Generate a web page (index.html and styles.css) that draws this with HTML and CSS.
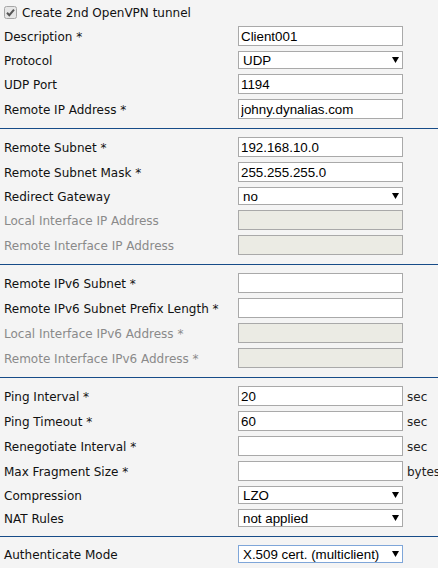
FILE: index.html
```html
<!DOCTYPE html>
<html lang="en">
<head>
    <meta charset="UTF-8">
    <meta name="viewport" content="width=device-width, initial-scale=1.0">
    <title>OpenVPN Configuration</title>
    <link rel="stylesheet" href="styles.css">
</head>
<body>
    <form class="vpn-form">
        <!-- Tunnel -->
        <div class="section first">
            <label class="check-row">
                <svg class="check-box" width="13" height="13" viewBox="0 0 13 13">
                    <rect x="0.5" y="0.5" width="12" height="12" rx="2" fill="#e6e6e6" stroke="#a6a6a6"/>
                    <path d="M3 6.8 L5.3 9.2 L10 3.6" fill="none" stroke="#555" stroke-width="2"/>
                </svg>
                Create 2nd OpenVPN tunnel
            </label>
            <div class="row"><span class="label">Description *</span><input class="field" type="text" value="Client001"></div>
            <div class="row"><span class="label">Protocol</span><select class="choice"><option>UDP</option><option>TCP</option></select></div>
            <div class="row"><span class="label">UDP Port</span><input class="field" type="text" value="1194"></div>
            <div class="row"><span class="label">Remote IP Address *</span><input class="field" type="text" value="johny.dynalias.com"></div>
        </div>

        <!-- IPv4 -->
        <div class="section">
            <div class="row"><span class="label">Remote Subnet *</span><input class="field" type="text" value="192.168.10.0"></div>
            <div class="row"><span class="label">Remote Subnet Mask *</span><input class="field" type="text" value="255.255.255.0"></div>
            <div class="row"><span class="label">Redirect Gateway</span><select class="choice"><option>no</option><option>yes</option></select></div>
            <div class="row"><span class="label disabled">Local Interface IP Address</span><input class="field" type="text" disabled></div>
            <div class="row"><span class="label disabled">Remote Interface IP Address</span><input class="field" type="text" disabled></div>
        </div>

        <!-- IPv6 -->
        <div class="section">
            <div class="row"><span class="label">Remote IPv6 Subnet *</span><input class="field" type="text"></div>
            <div class="row"><span class="label">Remote IPv6 Subnet Prefix Length *</span><input class="field" type="text"></div>
            <div class="row"><span class="label disabled">Local Interface IPv6 Address *</span><input class="field" type="text" disabled></div>
            <div class="row"><span class="label disabled">Remote Interface IPv6 Address *</span><input class="field" type="text" disabled></div>
        </div>

        <!-- Timing -->
        <div class="section">
            <div class="row"><span class="label">Ping Interval *</span><input class="field" type="text" value="20"><span class="unit">sec</span></div>
            <div class="row"><span class="label">Ping Timeout *</span><input class="field" type="text" value="60"><span class="unit">sec</span></div>
            <div class="row"><span class="label">Renegotiate Interval *</span><input class="field" type="text"><span class="unit">sec</span></div>
            <div class="row"><span class="label">Max Fragment Size *</span><input class="field" type="text"><span class="unit">bytes</span></div>
            <div class="row"><span class="label">Compression</span><select class="choice"><option>LZO</option><option>none</option></select></div>
            <div class="row"><span class="label">NAT Rules</span><select class="choice"><option>not applied</option><option>applied</option></select></div>
        </div>

        <!-- Auth -->
        <div class="section">
            <div class="row"><span class="label">Authenticate Mode</span><select class="choice focused"><option>X.509 cert. (multiclient)</option><option>pre-shared secret</option></select></div>
        </div>
    </form>
</body>
</html>
```

FILE: styles.css
```css
body {
    margin: 0;
    padding: 0;
    background-color: #f4f4f4;
    font-family: 'DejaVu Sans', Verdana, sans-serif;
    font-size: 12px;
    color: #111;
    width: 438px;
    overflow: hidden;
}

.vpn-form {
    margin: 0;
}

.section {
    display: flex;
    flex-direction: column;
    gap: 5px;
    padding: 8px 0 9px 4px;
    border-top: 1px solid #174c88;
}

.section.first {
    padding-top: 4px;
    border-top: none;
}

.check-row {
    display: flex;
    align-items: center;
    gap: 5px;
    height: 17px;
}

.check-box {
    flex: none;
}

.row {
    display: grid;
    grid-template-columns: 230px 165px auto;
    column-gap: 4px;
    align-items: center;
    white-space: nowrap;
}

.label,
.unit {
    padding-top: 1px;
}

.label.disabled {
    color: #8a8a8a;
}

.field {
    box-sizing: border-box;
    width: 165px;
    height: 20px;
    margin: 0;
    padding: 1px 2px;
    border: 1px solid #a9a9a9;
    background-color: #fff;
    font-family: 'Liberation Sans', Arial, sans-serif;
    font-size: 13.33px;
    color: #000;
    outline: none;
}

.field:disabled {
    background-color: #ebebe4;
}

.choice {
    box-sizing: border-box;
    width: 165px;
    height: 18px;
    margin: 0;
    padding: 0 0 0 4px;
    border: 1px solid #a9a9a9;
    border-radius: 0;
    background-color: #fff;
    background-image: url("data:image/svg+xml,%3Csvg xmlns='http://www.w3.org/2000/svg' width='7' height='6'%3E%3Cpath d='M0 0 H7 L3.5 6 Z' fill='%23000'/%3E%3C/svg%3E");
    background-repeat: no-repeat;
    background-position: 153px 5px;
    -webkit-appearance: none;
    appearance: none;
    font-family: 'Liberation Sans', Arial, sans-serif;
    font-size: 13.33px;
    color: #000;
    outline: none;
}

.choice.focused {
    border-color: #7ea6d9;
}

.unit {
    color: #222;
}
```
